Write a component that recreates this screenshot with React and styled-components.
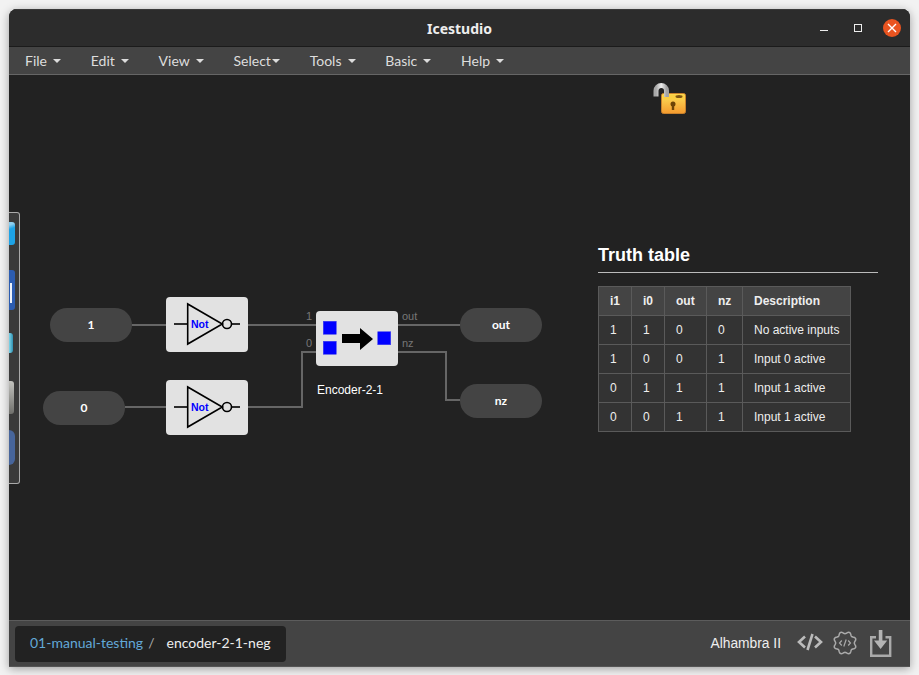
import React from "react";
import styled, { createGlobalStyle } from "styled-components";

const GlobalStyle = createGlobalStyle`
  html, body {
    margin: 0;
    height: 100%;
    background: #f2f2f2;
    overflow: hidden;
  }
`;

const MENUS = ["File", "Edit", "View", "Select", "Tools", "Basic", "Help"];

const ROWS = [
  ["1", "1", "0", "0", "No active inputs"],
  ["1", "0", "0", "1", "Input 0 active"],
  ["0", "1", "1", "1", "Input 1 active"],
  ["0", "0", "1", "1", "Input 1 active"],
];

// wavy outline with 8 bumps for the verilog settings icon
const gearPath = () => {
  const pts = [];
  for (let i = 0; i < 96; i++) {
    const a = (i / 96) * Math.PI * 2;
    const r = 10.4 + 1.1 * Math.cos(a * 8 + Math.PI);
    pts.push(`${(12 + r * Math.cos(a)).toFixed(2)} ${(12 + r * Math.sin(a)).toFixed(2)}`);
  }
  return `M${pts.join("L")}Z`;
};

const App = () => {
  return (
    <>
      <GlobalStyle />
      <Window>
        <TitleBar>
          <Title>Icestudio</Title>
          <WindowButtons>
            <MinButton />
            <MaxButton />
            <CloseButton>
              <svg width="12" height="12" viewBox="0 0 12 12">
                <path d="M2 2l8 8M10 2l-8 8" stroke="#fff" strokeWidth="1.4" />
              </svg>
            </CloseButton>
          </WindowButtons>
        </TitleBar>

        <MenuBar>
          {MENUS.map((name) => (
            <MenuItem key={name}>
              {name}
              <Caret $tight={name === "Select"} />
            </MenuItem>
          ))}
        </MenuBar>

        <Canvas>
          <LockIcon />
          <Dock>
            <DockIcon $gap={9} $h={23} $w={6} $color="linear-gradient(160deg, #8fd0f0 12%, #1ea3e6 30%)" />
            <DockIcon $gap={25} $h={40} $w={6} $color="#2c5cb0">
              <DockHighlight />
            </DockIcon>
            <DockIcon $gap={23} $h={20} $w={4} $color="linear-gradient(90deg, #7fd6ea, #2f8fb0)" />
            <DockIcon $gap={28} $h={33} $w={5} $color="linear-gradient(180deg, #c2c2be, #70706c)" />
            <DockIcon $gap={16} $h={35} $w={6} $color="#47659b" $round />
          </Dock>

          <Wires />

          <Pill $x={41} $y={233}>1</Pill>
          <Pill $x={34} $y={316}>0</Pill>
          <Pill $x={451} $y={233}>out</Pill>
          <Pill $x={451} $y={309}>nz</Pill>

          <NotBlock y={222} />
          <NotBlock y={305} />

          <Encoder>
            <svg width="82" height="55" viewBox="0 0 82 55">
              <g fill="#00f" stroke="#3c3cf0" strokeWidth="0.5">
                <rect x="7.250" y="10.250" width="13" height="13" />
                <rect x="7.250" y="30.250" width="13" height="13" />
                <rect x="61.750" y="20.750" width="13" height="13" />
              </g>
              <path d="M26 23h18v-6l13 11-13 11v-7H26z" fill="#000" />
            </svg>
          </Encoder>
          <EncoderName>Encoder-2-1</EncoderName>

          <PortLabel $x={297} $y={235}>1</PortLabel>
          <PortLabel $x={297} $y={262}>0</PortLabel>
          <PortLabel $x={393} $y={235}>out</PortLabel>
          <PortLabel $x={393} $y={262}>nz</PortLabel>

          <TruthPanel>
            <TruthTitle>Truth table</TruthTitle>
            <Table>
              <thead>
                <tr>
                  <Th $w={33}>i1</Th>
                  <Th $w={33}>i0</Th>
                  <Th $w={42}>out</Th>
                  <Th $w={36}>nz</Th>
                  <Th $w={108}>Description</Th>
                </tr>
              </thead>
              <tbody>
                {ROWS.map((row, i) => (
                  <tr key={i}>
                    {row.map((cell, j) => (
                      <Td key={j}>{cell}</Td>
                    ))}
                  </tr>
                ))}
              </tbody>
            </Table>
          </TruthPanel>
        </Canvas>

        <Footer>
          <Breadcrumb>
            <Crumb>01-manual-testing</Crumb>
            <Slash>/</Slash>
            <Current>encoder-2-1-neg</Current>
          </Breadcrumb>
          <FooterRight>
            <BoardName>Alhambra II</BoardName>
            <CodeIcon />
            <GearCodeIcon />
            <SaveIcon />
          </FooterRight>
        </Footer>
      </Window>
    </>
  );
};

export default App;

const Wires = () => (
  <WireLayer width="901" height="545" viewBox="0 0 901 545">
    <g fill="none" stroke="#666" strokeWidth="2">
      <path d="M123 250h34" />
      <path d="M239 250h68" />
      <path d="M116 332h41" />
      <path d="M239 332h54v-55h14" />
      <path d="M389 250h62" />
      <path d="M389 277h48v48h14" />
    </g>
  </WireLayer>
);

const NotBlock = ({ y }) => (
  <NotBox $y={y}>
    <svg width="82" height="55" viewBox="0 0 82 55">
      <g fill="none" stroke="#000" strokeWidth="1.6">
        <path d="M8 27h13.700" />
        <path d="M21.700 7v40L56.300 27z" />
        <circle cx="61" cy="27" r="4.500" />
        <path d="M65.500 27H74" />
      </g>
    </svg>
    <NotText>Not</NotText>
  </NotBox>
);

const LockIcon = () => (
  <LockSvg width="36" height="33" viewBox="0 0 36 33">
    <defs>
      <linearGradient id="lockBody" x1="0" y1="0" x2="0" y2="1">
        <stop offset="0" stopColor="#fde05a" />
        <stop offset="1" stopColor="#f49a2e" />
      </linearGradient>
      <linearGradient id="lockBar" x1="0" y1="0" x2="1" y2="0">
        <stop offset="0" stopColor="#a8a8a8" />
        <stop offset="0.5" stopColor="#eeeeee" />
        <stop offset="1" stopColor="#a4a4a4" />
      </linearGradient>
    </defs>
    <rect x="9.500" y="11.500" width="24" height="20" rx="2" fill="url(#lockBody)" stroke="#c9812b" />
    <rect x="10.500" y="12.500" width="22" height="5" fill="#fbcf42" />
    <ellipse cx="27" cy="14.500" rx="3.500" ry="1.500" fill="#7d5413" />
    <circle cx="21" cy="22" r="2.500" fill="#6d4407" />
    <rect x="19.800" y="22" width="2.400" height="6" fill="#6d4407" />
    <path
      d="M4 14.500V8.750a5.250 5.250 0 0 1 10.500 0V15"
      fill="none"
      stroke="url(#lockBar)"
      strokeWidth="5"
    />
  </LockSvg>
);

const CodeIcon = () => (
  <CodeSvg width="26" height="18" viewBox="0 0 26 18">
    <g fill="none" stroke="#bbb" strokeWidth="2.600">
      <path d="M8 3.500L2 9l6 5.500" />
      <path d="M18 3.500L24 9l-6 5.500" />
      <path d="M15.500 1l-5 16" />
    </g>
  </CodeSvg>
);

const GearCodeIcon = () => (
  <svg width="24" height="24" viewBox="0 0 24 24">
    <g fill="none" stroke="#aaa">
      <path d={gearPath()} strokeWidth="1.500" />
      <path d="M8.800 9.500L6.500 12l2.300 2.500M15.200 9.500l2.300 2.500-2.300 2.500M13.200 8.500l-2.400 7" strokeWidth="1.200" />
    </g>
  </svg>
);

const SaveIcon = () => (
  <SaveSvg width="22" height="27" viewBox="0 0 22 27">
    <g fill="none" stroke="#aaa" strokeWidth="2.400">
      <path d="M6 7.200H1.200v18.600h19V7.200H15.500" />
    </g>
    <path d="M8.800 0h3.600v10.500h4.800l-6.600 8.500-6.600-8.500h4.800z" fill="#b4b4b4" />
  </SaveSvg>
);

const Window = styled.div`
  margin: 9px 0 0 9px;
  width: 901px;
  height: 658px;
  display: flex;
  flex-direction: column;
  background: #222;
  border-radius: 8px 8px 0 0;
  overflow: hidden;
  box-shadow: 0 2px 10px rgba(0, 0, 0, 0.35);
`;

const TitleBar = styled.div`
  position: relative;
  flex-shrink: 0;
  display: flex;
  justify-content: center;
  align-items: center;
  background: #2c2c2c;
  border-top: 1px solid #3a3a3a;
  border-bottom: 1px solid #1b1b1b;
  box-sizing: border-box;
  height: 38px;
`;

const Title = styled.div`
  color: #eee;
  font: bold 14px "Noto Sans", sans-serif;
`;

const WindowButtons = styled.div`
  position: absolute;
  right: 9px;
  top: 9px;
  display: flex;
  align-items: center;
  gap: 22px;
`;

const MinButton = styled.div`
  width: 8px;
  height: 1px;
  margin-top: 4px;
  background: #eee;
`;

const MaxButton = styled.div`
  box-sizing: border-box;
  width: 8px;
  height: 8px;
  margin-left: 4px;
  border: 1px solid #eee;
`;

const CloseButton = styled.div`
  width: 18px;
  height: 18px;
  margin-left: -1px;
  border-radius: 50%;
  background: #e95420;
  display: flex;
  align-items: center;
  justify-content: center;
`;

const MenuBar = styled.div`
  height: 28px;
  flex-shrink: 0;
  box-sizing: border-box;
  display: flex;
  align-items: center;
  gap: 29.800px;
  padding-left: 16px;
  padding-bottom: 1px;
  background: #444;
  border-bottom: 1px solid #666;
`;

const MenuItem = styled.div`
  display: flex;
  align-items: center;
  color: #ddd;
  font: 14px Lato, sans-serif;
`;

const Caret = styled.span`
  width: 0;
  height: 0;
  margin-left: ${(props) => (props.$tight ? "1px" : "6px")};
  margin-top: 2px;
  border-top: 4px solid #ddd;
  border-left: 4px solid transparent;
  border-right: 4px solid transparent;
`;

const Canvas = styled.div`
  position: relative;
  flex: 1;
  background: #222;
  overflow: hidden;
`;

const LockSvg = styled.svg`
  position: absolute;
  left: 643px;
  top: 7px;
`;

const Dock = styled.div`
  position: absolute;
  left: 0;
  top: 137px;
  width: 10px;
  height: 270px;
  display: flex;
  flex-direction: column;
  align-items: flex-start;
  background: #3a3a3a;
  border: 1px solid #aaa;
  border-left: none;
  border-radius: 0 3px 3px 0;
`;

const DockIcon = styled.div`
  position: relative;
  flex-shrink: 0;
  margin-top: ${(props) => props.$gap}px;
  width: ${(props) => props.$w}px;
  height: ${(props) => props.$h}px;
  background: ${(props) => props.$color};
  border-radius: ${(props) => (props.$round ? "0 17px 17px 0" : "0 3px 3px 0")};
`;

const DockHighlight = styled.div`
  position: absolute;
  left: 1px;
  top: 13px;
  width: 2px;
  height: 20px;
  background: #eef2fa;
`;

const WireLayer = styled.svg`
  position: absolute;
  left: 0;
  top: 0;
`;

const Pill = styled.div`
  position: absolute;
  left: ${(props) => props.$x}px;
  top: ${(props) => props.$y}px;
  box-sizing: border-box;
  width: 82px;
  height: 34px;
  padding-bottom: 2px;
  border-radius: 17px;
  background: #444;
  color: #fff;
  display: flex;
  align-items: center;
  justify-content: center;
  font: bold 12px Lato, sans-serif;
`;

const NotBox = styled.div`
  position: absolute;
  left: 157px;
  top: ${(props) => props.$y}px;
  width: 82px;
  height: 55px;
  border-radius: 4px;
  background: #e2e2e2;
`;

const NotText = styled.span`
  position: absolute;
  left: 25px;
  top: 21px;
  color: #00f;
  font: bold 10.500px/13px "Liberation Sans", sans-serif;
`;

const Encoder = styled.div`
  position: absolute;
  left: 307px;
  top: 236px;
  width: 82px;
  height: 55px;
  border-radius: 4px;
  background: #e2e2e2;
`;

const EncoderName = styled.div`
  position: absolute;
  left: 308px;
  top: 308px;
  color: #fff;
  font: 12px/14px "Liberation Sans", sans-serif;
`;

const PortLabel = styled.span`
  position: absolute;
  left: ${(props) => props.$x}px;
  top: ${(props) => props.$y}px;
  color: #777;
  font: 11px/13px "Liberation Sans", sans-serif;
`;

const TruthPanel = styled.div`
  position: absolute;
  left: 589px;
  top: 169px;
  width: 280px;
  font-family: "Liberation Sans", sans-serif;
`;

const TruthTitle = styled.h2`
  margin: 0 0 13px;
  padding: 0 0 6px;
  color: #fff;
  font-size: 18px;
  line-height: 22px;
  font-weight: bold;
  border-bottom: 1px solid #bbb;
`;

const Table = styled.table`
  border-collapse: collapse;
  table-layout: fixed;
  color: #eee;
  font-size: 12px;
`;

const Th = styled.th`
  box-sizing: border-box;
  width: ${(props) => props.$w}px;
  height: 29px;
  padding: 0 0 0 11px;
  text-align: left;
  background: #444;
  border: 1px solid #5a5a5a;
`;

const Td = styled.td`
  height: 29px;
  box-sizing: border-box;
  padding: 0 0 0 11px;
  background: #333;
  border: 1px solid #5a5a5a;
`;

const Footer = styled.div`
  height: 47px;
  flex-shrink: 0;
  box-sizing: border-box;
  display: flex;
  align-items: center;
  justify-content: space-between;
  padding: 0 18px 0 6px;
  background: #444;
  border-top: 1px solid #5c5c5c;
  border-bottom: 1px solid #555;
`;

const Breadcrumb = styled.div`
  display: flex;
  align-items: center;
  width: 271px;
  height: 36px;
  box-sizing: border-box;
  padding: 0 0 2px 15px;
  border-radius: 4px;
  background: #222;
  font: 14px Lato, sans-serif;
`;

const Crumb = styled.span`
  color: #62a8d8;
`;

const Slash = styled.span`
  color: #aaa;
  margin: 0 12px 0 5px;
`;

const Current = styled.span`
  color: #eee;
`;

const FooterRight = styled.div`
  display: flex;
  align-items: center;
  gap: 10px;
  margin-bottom: 1px;
`;

const BoardName = styled.span`
  color: #eee;
  font: 13.800px "Liberation Sans", sans-serif;
  margin-right: 6px;
`;

const CodeSvg = styled.svg`
  margin-bottom: 2px;
`;

const SaveSvg = styled.svg`
  margin-left: 3px;
`;
